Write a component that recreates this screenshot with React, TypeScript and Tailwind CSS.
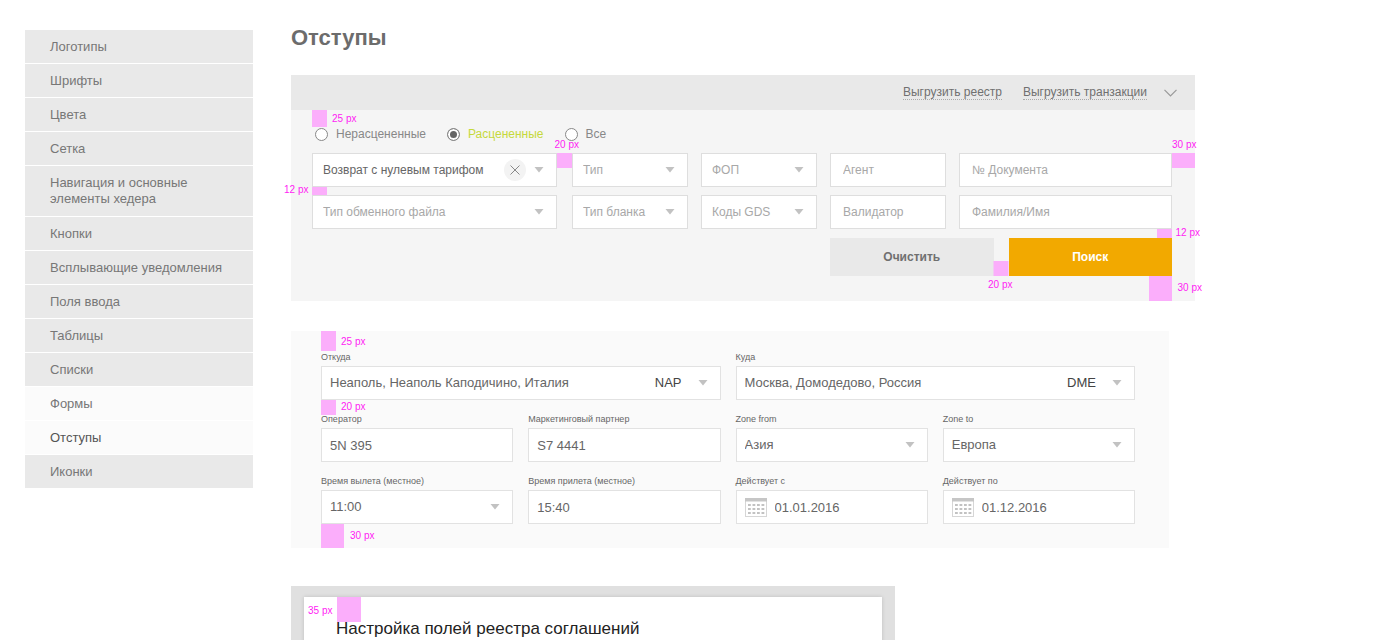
import type { ReactNode } from 'react';
import clsx from 'clsx';

const menu = [
  'Логотипы',
  'Шрифты',
  'Цвета',
  'Сетка',
  'Навигация и основные элементы хедера',
  'Кнопки',
  'Всплывающие уведомления',
  'Поля ввода',
  'Таблицы',
  'Списки',
  'Формы',
  'Отступы',
  'Иконки',
];

const lightItems = ['Формы', 'Отступы'];

function Arrow() {
  return (
    <svg width="10" height="6" viewBox="0 0 10 6" className="pointer-events-none shrink-0" aria-hidden="true">
      <path d="M0.5 0h9L5 5.5z" fill="#c2c2c2" />
    </svg>
  );
}

function CalendarIcon() {
  return (
    <svg width="22" height="19" viewBox="0 0 22 19" className="shrink-0" aria-hidden="true">
      <rect x="0.5" y="0.5" width="21" height="18" fill="#fff" stroke="#d6d6d6" />
      <path d="M0 0h22v3.5H0z" fill="#c6c6c6" />
      {[6, 10, 14].map(y =>
        [3, 7.5, 12, 16.5].map(x => (
          <rect key={`${x}-${y}`} x={x} y={y} width="2.8" height="2" fill="#c2c2c2" />
        ))
      )}
    </svg>
  );
}

// Pink block with a size caption; both are placed over the form
function Gap({ label, box, text }: { label: string; box: string; text: string }) {
  return (
    <>
      <span className={clsx('pointer-events-none absolute z-10 bg-[#fbaefb]', box)} />
      <span
        className={clsx(
          'pointer-events-none absolute z-10 text-[10px] leading-3 font-normal whitespace-nowrap text-[#ff1cf4]',
          text
        )}
      >
        {label}
      </span>
    </>
  );
}

function FilterSelect({ name, active, children }: { name: string; active?: boolean; children?: ReactNode }) {
  return (
    <div className="flex h-[34px] items-center border border-[#dedede] bg-white pr-3">
      <select
        aria-label={name}
        className={clsx(
          'h-full min-w-0 flex-1 appearance-none bg-transparent pl-[10px] text-xs outline-none',
          active ? 'text-[#666]' : 'text-[#a8a8a8]'
        )}
      >
        <option>{name}</option>
      </select>
      {children}
      <Arrow />
    </div>
  );
}

function FilterInput({ name }: { name: string }) {
  return (
    <input
      aria-label={name}
      placeholder={name}
      className="h-[34px] w-full min-w-0 border border-[#dedede] bg-white px-3 text-xs text-[#666] outline-none placeholder:text-[#a8a8a8]"
    />
  );
}

type FieldProps = {
  id: string;
  label: string;
  value: string;
  code?: string;
  select?: boolean;
  date?: boolean;
  wide?: boolean;
};

function Field({ id, label, value, code, select, date, wide }: FieldProps) {
  return (
    <div className={clsx('min-w-0', wide && 'col-span-2')}>
      <label htmlFor={id} className="mb-[2px] block text-[9px] leading-[14px] text-[#666]">
        {label}
      </label>
      <div className="flex h-[34px] items-center border border-[#e2e2e2] bg-white px-2 text-[13px] text-[#666]">
        {date && <CalendarIcon />}
        {select ? (
          <select id={id} className="h-full min-w-0 flex-1 appearance-none bg-transparent outline-none">
            <option>{value}</option>
          </select>
        ) : (
          <input
            id={id}
            defaultValue={value}
            className={clsx('h-full min-w-0 flex-1 bg-transparent outline-none', date && 'pl-2')}
          />
        )}
        {code && <span className="pr-4 text-[#444]">{code}</span>}
        {select && (
          <span className="pr-1">
            <Arrow />
          </span>
        )}
      </div>
    </div>
  );
}

export default function App() {
  return (
    <div className="flex h-screen items-start gap-[38px] overflow-hidden bg-white pl-[25px] font-['Liberation_Sans',Arial,sans-serif]">
      <nav className="mt-[30px] w-[228px] shrink-0">
        <ul className="flex flex-col gap-px">
          {menu.map(item => (
            <li key={item}>
              <a
                href="#"
                className={clsx(
                  'flex min-h-[33px] items-center px-[25px] text-[13px] leading-4',
                  lightItems.includes(item) ? 'bg-[#fbfbfb]' : 'bg-[#e9e9e9]',
                  item === 'Отступы' ? 'text-[#555]' : 'text-[#777]',
                  item.length > 30 && 'py-[9px]'
                )}
              >
                {item}
              </a>
            </li>
          ))}
        </ul>
      </nav>

      <main className="min-w-0 flex-1 pt-6 pr-[184px]">
        <h1 className="text-[22px] leading-7 font-bold text-[#6c6c6c]">Отступы</h1>

        <section className="mt-[23px] bg-[#f5f5f5]">
          <div className="flex h-[35px] items-center justify-end gap-[21px] bg-[#e9e9e9] pr-[18px] text-xs leading-[14px] text-[#707070]">
            <a href="#" className="border-b border-dotted border-[#aaa]">Выгрузить реестр</a>
            <a href="#" className="border-b border-dotted border-[#aaa]">Выгрузить транзакции</a>
            <button aria-label="Свернуть" className="-ml-1">
              <svg width="13" height="8" viewBox="0 0 13 8" fill="none" stroke="#999" strokeWidth="1.2">
                <path d="M0.5 0.8l6 6 6-6" />
              </svg>
            </button>
          </div>

          <form className="relative pt-4 pr-[23px] pb-[25px] pl-[21px]">
            <Gap label="25 px" box="left-[21px] top-0 h-[17px] w-[15px]" text="left-[41px] top-[3px]" />

            <div className="flex h-4 items-center gap-[21px] pl-[3px] text-xs">
              {['Нерасцененные', 'Расцененные', 'Все'].map((name, i) => (
                <label
                  key={name}
                  className={clsx('flex items-center gap-2', i === 1 ? 'text-[#c5d93c]' : 'text-[#888]')}
                >
                  <input
                    type="radio"
                    name="price"
                    defaultChecked={i === 1}
                    className="size-[13px] appearance-none rounded-full border border-[#888] bg-white checked:border-[#888] checked:bg-[#666] checked:shadow-[inset_0_0_0_2px_white]"
                  />
                  {name}
                </label>
              ))}
            </div>

            <div className="mt-[11px] flex gap-[15px]">
              <div className="relative flex min-w-0 flex-[245] flex-col gap-2">
                <FilterSelect name="Возврат с нулевым тарифом" active>
                  <button
                    type="button"
                    aria-label="Сбросить"
                    className="mr-2 flex size-[22px] shrink-0 items-center justify-center rounded-full bg-[#f3f3f3]"
                  >
                    <svg width="10" height="10" viewBox="0 0 10 10" stroke="#888" strokeWidth="1">
                      <path d="M0.5 0.5l9 9M9.5 0.5l-9 9" />
                    </svg>
                  </button>
                </FilterSelect>
                <FilterSelect name="Тип обменного файла" />
                <Gap label="20 px" box="left-full top-0 size-[15px]" text="right-[-22px] top-[-14px]" />
                <Gap label="12 px" box="left-0 top-[34px] h-2 w-[15px]" text="left-[-28px] top-[31px]" />
              </div>

              <div className="relative grid min-w-0 flex-[600] grid-cols-[116fr_116fr_116fr_213fr] gap-x-[13px] gap-y-2">
                <FilterSelect name="Тип" />
                <FilterSelect name="ФОП" />
                <FilterInput name="Агент" />
                <FilterInput name="№ Документа" />
                <FilterSelect name="Тип бланка" />
                <FilterSelect name="Коды GDS" />
                <FilterInput name="Валидатор" />
                <FilterInput name="Фамилия/Имя" />
                <div className="relative col-span-2 col-start-3 mt-px grid grid-cols-2 gap-[15px] text-xs font-bold">
                  <button type="reset" className="h-[38px] bg-[#e9e9e9] text-[#707070]">
                    Очистить
                  </button>
                  <button type="button" className="h-[38px] bg-[#f2a900] text-white">
                    Поиск
                  </button>
                  <Gap label="20 px" box="left-1/2 bottom-0 size-[15px] -translate-x-1/2" text="left-[158px] top-[41px]" />
                  <Gap label="12 px" box="right-0 bottom-full h-[9px] w-[15px]" text="right-[-28px] top-[-11px]" />
                  <Gap label="30 px" box="right-0 top-full h-[25px] w-[23px]" text="right-[-30px] top-[44px]" />
                </div>
                <Gap label="30 px" box="left-full top-0 h-[15px] w-[23px]" text="left-full top-[-14px]" />
              </div>
            </div>
          </form>
        </section>

        <section className="mt-[30px] max-w-[878px] bg-[#fafafa]">
          <form className="relative grid grid-cols-4 gap-x-[15px] gap-y-3 pt-[19px] pr-[34px] pb-6 pl-[30px]">
            <Field id="from" label="Откуда" value="Неаполь, Неаполь Каподичино, Италия" code="NAP" select wide />
            <Field id="to" label="Куда" value="Москва, Домодедово, Россия" code="DME" select wide />
            <Field id="operator" label="Оператор" value="5N 395" />
            <Field id="partner" label="Маркетинговый партнер" value="S7 4441" />
            <Field id="zone-from" label="Zone from" value="Азия" select />
            <Field id="zone-to" label="Zone to" value="Европа" select />
            <Field id="departure" label="Время вылета (местное)" value="11:00" select />
            <Field id="arrival" label="Время прилета (местное)" value="15:40" />
            <Field id="valid-from" label="Действует с" value="01.01.2016" date />
            <Field id="valid-to" label="Действует по" value="01.12.2016" date />
            <Gap label="25 px" box="left-[30px] top-0 h-5 w-[15px]" text="left-[50px] top-[5px]" />
            <Gap label="20 px" box="left-[30px] top-[69px] size-[15px]" text="left-[50px] top-[70px]" />
            <Gap label="30 px" box="left-[30px] bottom-0 h-6 w-[23px]" text="left-[59px] bottom-[6px]" />
          </form>
        </section>

        <section className="mt-[38px] max-w-[604px] bg-[#e0e0e0] px-[13px] pt-[11px] pb-3">
          <div className="relative bg-white pt-[22px] pb-10 pl-8 shadow-[0_0_4px_rgba(0,0,0,0.15)]">
            <Gap label="35 px" box="left-[33px] top-0 h-[25px] w-6" text="left-1 top-2" />
            <h2 className="text-[17px] leading-5 text-[#222]">Настройка полей реестра соглашений</h2>
          </div>
        </section>
      </main>
    </div>
  );
}
